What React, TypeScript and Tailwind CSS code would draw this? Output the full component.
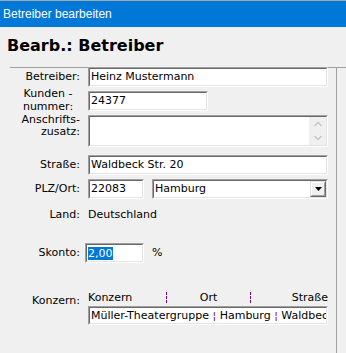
import React from "react";

function Sunken({ className, inner, children }: { className: string; inner?: string; children?: React.ReactNode }) {
  return (
    <div className={"border border-t-[#a0a0a0] border-l-[#a0a0a0] border-r-white border-b-white " + className}>
      <div className={"h-full border border-t-[#696969] border-l-[#696969] border-r-[#e3e3e3] border-b-[#e3e3e3] bg-white overflow-hidden " + (inner ?? "")}>
        {children}
      </div>
    </div>
  );
}

function Chevron({ down }: { down?: boolean }) {
  return (
    <svg width="8" height="6" viewBox="0 0 8 6">
      <path
        d={down ? "M0.5 1 L4 4.5 L7.5 1" : "M0.5 5 L4 1.5 L7.5 5"}
        fill="none"
        stroke="#c4c4c4"
        strokeWidth="1.3"
      />
    </svg>
  );
}

function DashSep() {
  return (
    <svg width="1" height="12" viewBox="0 0 1 12" className="self-center">
      <line x1="0.5" y1="0" x2="0.5" y2="12" stroke="#800080" strokeWidth="1" strokeDasharray="3 1" />
    </svg>
  );
}

export default function App() {
  return (
    <div className="w-[346px] h-[353px] overflow-hidden bg-[#f0f0f0] text-black font-['DejaVu_Sans',sans-serif] text-[11px]">
      {/* title bar */}
      <div className="h-px bg-[#a3a8ad]" />
      <div className="h-[26px] bg-[#0078d7] pl-[3px] leading-[26px] text-white text-[12px] font-['Liberation_Sans',Arial,sans-serif]">
        Betreiber bearbeiten
      </div>

      {/* heading */}
      <div className="mt-[9px] h-[19px] leading-[19px] pl-[7px] text-[16px] font-bold">Bearb.: Betreiber</div>

      {/* panel */}
      <div className="mt-[12px] ml-[10px] h-[286px] border-t border-t-[#a0a0a0] flex">
        <div className="w-[326px] flex flex-col">
          {/* Betreiber */}
          <div className="-mt-px flex h-[20px]">
            <div className="w-[70px] text-right leading-[20px]">Betreiber:</div>
            <Sunken className="ml-[8px] w-[240px] h-[20px]" inner="pl-[1px] leading-[16px]">
              Heinz Mustermann
            </Sunken>
          </div>

          {/* Kundennummer */}
          <div className="flex h-[24px]">
            <div className="w-[70px] pr-[4px] text-center leading-[13px] pl-[10px]">
              Kunden -<br />nummer:
            </div>
            <Sunken className="ml-[8px] mt-[4px] w-[120px] h-[20px]" inner="pl-[1px] leading-[16px]">
              24377
            </Sunken>
          </div>

          {/* Anschriftszusatz */}
          <div className="flex h-[36px]">
            <div className="w-[70px] mt-[3px] text-right leading-[12px]">
              Anschrifts-<br />zusatz:
            </div>
            <Sunken className="ml-[8px] mt-[4px] w-[240px] h-[32px]" inner="flex">
              <div className="flex-1" />
              <div className="w-[17px] bg-[#f0f0f0] flex flex-col">
                <div className="h-[14px] flex items-center justify-center">
                  <Chevron />
                </div>
                <div className="h-[14px] flex items-center justify-center">
                  <Chevron down />
                </div>
              </div>
            </Sunken>
          </div>

          {/* Straße */}
          <div className="mt-[8px] flex h-[20px]">
            <div className="w-[70px] text-right leading-[20px]">Straße:</div>
            <Sunken className="ml-[8px] w-[240px] h-[20px]" inner="pl-[1px] leading-[16px]">
              Waldbeck Str. 20
            </Sunken>
          </div>

          {/* PLZ/Ort */}
          <div className="mt-[4px] flex h-[20px]">
            <div className="w-[70px] text-right leading-[20px]">PLZ/Ort:</div>
            <Sunken className="ml-[8px] w-[56px] h-[20px]" inner="pl-[1px] leading-[16px]">
              22083
            </Sunken>
            <Sunken className="ml-[8px] w-[176px] h-[20px]" inner="flex">
              <div className="flex-1 pl-[1px] leading-[16px]">Hamburg</div>
              <div className="w-[16px] h-[16px] border border-t-[#e3e3e3] border-l-[#e3e3e3] border-r-[#696969] border-b-[#696969]">
                <div className="h-full border border-t-white border-l-white border-r-[#a0a0a0] border-b-[#a0a0a0] bg-[#f0f0f0] flex items-center justify-center">
                  <svg width="7" height="4" viewBox="0 0 7 4">
                    <path d="M0 0 H7 L3.5 4 Z" fill="#000" />
                  </svg>
                </div>
              </div>
            </Sunken>
          </div>

          {/* Land */}
          <div className="mt-[9px] flex h-[14px] leading-[14px]">
            <div className="w-[70px] text-right">Land:</div>
            <div className="ml-[8px]">Deutschland</div>
          </div>

          {/* Skonto */}
          <div className="mt-[21px] flex h-[20px]">
            <div className="w-[70px] text-right leading-[20px]">Skonto:</div>
            <Sunken className="ml-[5px] w-[59px] h-[20px]" inner="pl-[1px] flex items-center">
              <span className="inline-block h-[13px] leading-[13px] bg-[#0078d7] text-white">2,00</span>
            </Sunken>
            <div className="ml-[8px] leading-[20px]">%</div>
          </div>

          {/* Konzern */}
          <div className="mt-[28px] flex">
            <div className="w-[70px] mt-[3px] text-right leading-[14px]">Konzern:</div>
            <div className="ml-[8px] w-[240px] flex flex-col">
              <div className="h-[14px] flex leading-[14px]">
                <div className="w-[78px]">Konzern</div>
                <DashSep />
                <div className="w-[83px] text-center">Ort</div>
                <DashSep />
                <div className="flex-1 text-right">Straße</div>
              </div>
              <Sunken className="mt-[1px] w-[240px] h-[19px]" inner="pl-[1px] leading-[15px] whitespace-nowrap">
                Müller-Theatergruppe <span className="text-[#800080]">¦</span> Hamburg{" "}
                <span className="text-[#800080]">¦</span> Waldbeck Str. 20
              </Sunken>
            </div>
          </div>
        </div>
        <div className="flex-1 border-l border-l-[#a0a0a0]" />
      </div>
    </div>
  );
}
